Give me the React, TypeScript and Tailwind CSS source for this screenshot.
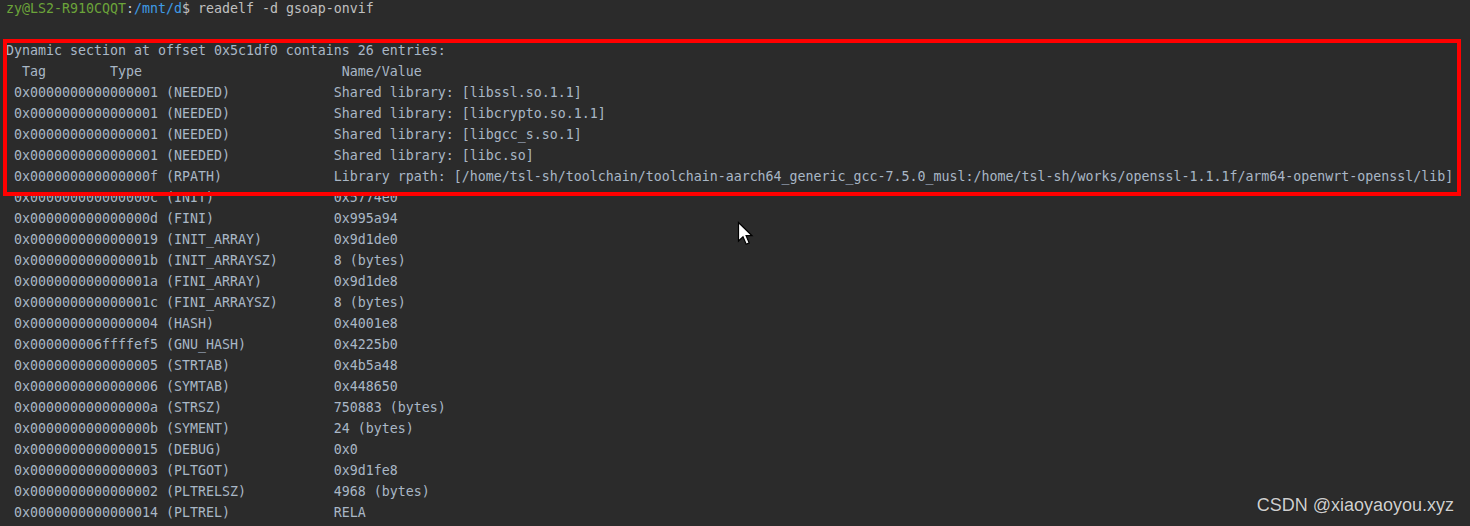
const rows: [string, string, string][] = [
  ['0x0000000000000001', '(NEEDED)', 'Shared library: [libssl.so.1.1]'],
  ['0x0000000000000001', '(NEEDED)', 'Shared library: [libcrypto.so.1.1]'],
  ['0x0000000000000001', '(NEEDED)', 'Shared library: [libgcc_s.so.1]'],
  ['0x0000000000000001', '(NEEDED)', 'Shared library: [libc.so]'],
  [
    '0x000000000000000f',
    '(RPATH)',
    'Library rpath: [/home/tsl-sh/toolchain/toolchain-aarch64_generic_gcc-7.5.0_musl:/home/tsl-sh/works/openssl-1.1.1f/arm64-openwrt-openssl/lib]',
  ],
  ['0x000000000000000c', '(INIT)', '0x5774e0'],
  ['0x000000000000000d', '(FINI)', '0x995a94'],
  ['0x0000000000000019', '(INIT_ARRAY)', '0x9d1de0'],
  ['0x000000000000001b', '(INIT_ARRAYSZ)', '8 (bytes)'],
  ['0x000000000000001a', '(FINI_ARRAY)', '0x9d1de8'],
  ['0x000000000000001c', '(FINI_ARRAYSZ)', '8 (bytes)'],
  ['0x0000000000000004', '(HASH)', '0x4001e8'],
  ['0x000000006ffffef5', '(GNU_HASH)', '0x4225b0'],
  ['0x0000000000000005', '(STRTAB)', '0x4b5a48'],
  ['0x0000000000000006', '(SYMTAB)', '0x448650'],
  ['0x000000000000000a', '(STRSZ)', '750883 (bytes)'],
  ['0x000000000000000b', '(SYMENT)', '24 (bytes)'],
  ['0x0000000000000015', '(DEBUG)', '0x0'],
  ['0x0000000000000003', '(PLTGOT)', '0x9d1fe8'],
  ['0x0000000000000002', '(PLTRELSZ)', '4968 (bytes)'],
  ['0x0000000000000014', '(PLTREL)', 'RELA'],
];

function Cursor() {
  return (
    <svg className="absolute left-[737px] top-[221px]" width="18" height="26" viewBox="0 0 18 26">
      <path
        d="M1.5 1.5 L1.5 20 L6 15.8 L9.2 23.2 L12.2 21.9 L9.1 14.7 L15 14.7 Z"
        fill="#ffffff"
        stroke="#000000"
        strokeWidth="1.2"
      />
    </svg>
  );
}

export default function App() {
  return (
    <div className="relative w-[1470px] h-[526px] overflow-hidden bg-[#2b2b2b]">
      <div className="flex flex-col -mt-[2px] pl-[6px] font-['DejaVu_Sans_Mono',monospace] text-[13.29px] leading-[21px] text-[#a9b7c6] whitespace-pre">
        <div>
          <span className="text-[#6ba43a]">zy@LS2-R910CQQT</span>
          <span className="text-[#c8c8c8]">:</span>
          <span className="text-[#3f9be6]">/mnt/d</span>
          <span className="text-[#c0c0c0]">$ readelf -d gsoap-onvif</span>
        </div>
        <div>&nbsp;</div>
        <div>Dynamic section at offset 0x5c1df0 contains 26 entries:</div>
        <div>{'  Tag        Type                         Name/Value'}</div>
        {rows.map(([tag, type, value], i) => (
          <div key={i}>{' ' + tag + ' ' + type.padEnd(21) + value}</div>
        ))}
      </div>

      {/* annotation box drawn over the output */}
      <div className="absolute left-[3px] top-[39px] w-[1458px] h-[157px] border-4 border-[#ff0000]" />

      <Cursor />

      <div className="absolute right-[16px] top-[494px] font-['Liberation_Sans',Arial,sans-serif] text-[18px] leading-[22px] text-[#cfcfcf] [text-shadow:0_0_1px_rgba(0,0,0,0.6)]">
        CSDN @xiaoyaoyou.xyz
      </div>
    </div>
  );
}
